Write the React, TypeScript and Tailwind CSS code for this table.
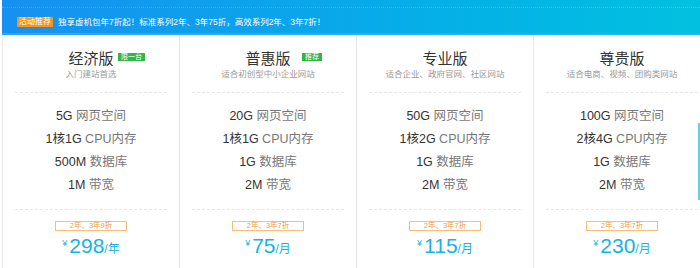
const plans = [
  {
    name: '经济版',
    tag: '限一台',
    desc: '入门建站首选',
    items: [['5G', '网页空间'], ['1核1G', 'CPU内存'], ['500M', '数据库'], ['1M', '带宽']],
    promo: '2年、3年9折',
    price: '298',
    unit: '/年',
  },
  {
    name: '普惠版',
    tag: '推荐',
    desc: '适合初创型中小企业网站',
    items: [['20G', '网页空间'], ['1核1G', 'CPU内存'], ['1G', '数据库'], ['2M', '带宽']],
    promo: '2年、3年7折',
    price: '75',
    unit: '/月',
  },
  {
    name: '专业版',
    desc: '适合企业、政府官网、社区网站',
    items: [['50G', '网页空间'], ['1核2G', 'CPU内存'], ['1G', '数据库'], ['2M', '带宽']],
    promo: '2年、3年7折',
    price: '115',
    unit: '/月',
  },
  {
    name: '尊贵版',
    desc: '适合电商、视频、团购类网站',
    items: [['100G', '网页空间'], ['2核4G', 'CPU内存'], ['1G', '数据库'], ['2M', '带宽']],
    promo: '2年、3年7折',
    price: '230',
    unit: '/月',
  },
];

type Plan = (typeof plans)[number] & { tag?: string };

function PlanCard({ plan }: { plan: Plan }) {
  return (
    <div className="relative w-[177px] shrink-0 border-l border-[#e8e8e8] flex flex-col items-center">
      <div className="mt-[15px] h-[18px] leading-[18px] text-[15px] text-[#333]">{plan.name}</div>
      {plan.tag && (
        <span className="absolute right-[34px] top-[18px] h-[8px] px-[3px] bg-[#35b548] text-white text-[7px] leading-[8px]">
          {plan.tag}
        </span>
      )}
      <div className="h-[12px] leading-[12px] text-[8.5px] text-[#999]">{plan.desc}</div>
      <div className="mt-[12px] w-[152px] border-t border-dashed border-[#e6e6e6]" />
      <ul className="mt-[12px] text-[12.5px] leading-[23px] text-center">
        {plan.items.map(([value, label]) => (
          <li key={label}>
            <span className="text-[#333]">{value}</span> <span className="text-[#777]">{label}</span>
          </li>
        ))}
      </ul>
      <div className="mt-[12px] w-[152px] border-t border-dashed border-[#e6e6e6]" />
      <div className="mt-[11px] w-[72px] h-[10px] border border-[#f7bd7a] text-[#f0a048] text-[7.5px] leading-[8px] text-center">
        {plan.promo}
      </div>
      <div className="mt-[3px] h-[24px] flex items-baseline text-[#17b3e4]">
        <span className="self-start mt-[5px] mr-[2px] text-[9px] leading-[9px]">¥</span>
        <span className="text-[21px] leading-[24px]">{plan.price}</span>
        <span className="text-[12px]">{plan.unit}</span>
      </div>
    </div>
  );
}

export default function App() {
  return (
    <div
      className="relative w-[700px] h-[268px] overflow-hidden bg-white"
      style={{ fontFamily: '"Liberation Sans", "Noto Sans CJK SC", sans-serif' }}
    >
      <div className="ml-[2px] h-[35px] bg-linear-to-r from-[#1790f1] to-[#02c1e0] border-b-2 border-[#3aaef2]/70 flex flex-col">
        <div className="mt-[7px] border-t border-dotted border-white/20" />
        <div className="mt-[9px] flex items-center">
          <span className="ml-[15px] h-[10px] px-[2px] bg-[#f7931e] text-white text-[8px] leading-[10px]">活动推荐</span>
          <span className="ml-[5px] text-white text-[8.5px] leading-[10px]">
            独享虚机包年7折起！标准系列2年、3年75折，高效系列2年、3年7折！
          </span>
        </div>
      </div>
      <div className="flex pl-[2px] h-[233px]">
        {plans.map(p => (
          <PlanCard key={p.name} plan={p} />
        ))}
      </div>
      <div className="absolute right-0 top-[123px] w-[2px] h-[77px] bg-[#63d2e6]" />
    </div>
  );
}
